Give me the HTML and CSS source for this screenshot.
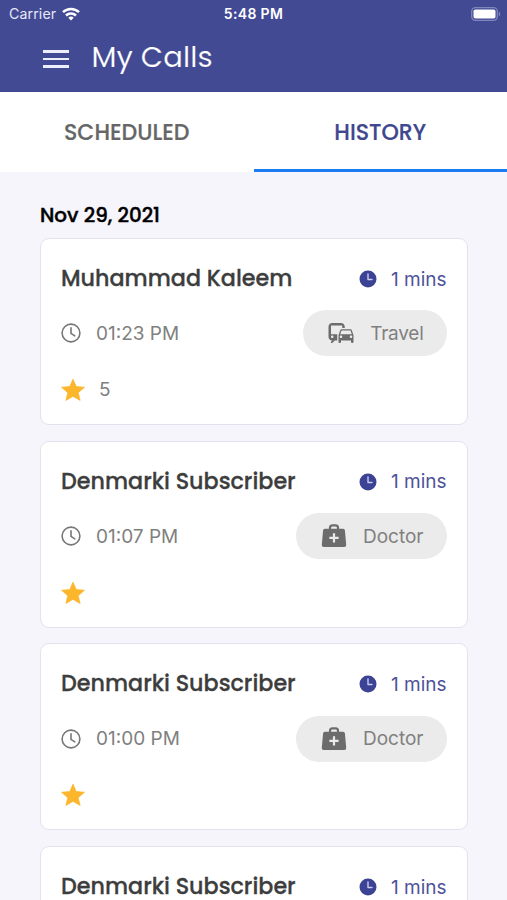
FILE: index.html
```html
<!DOCTYPE html>
<html lang="en">
<head>
<meta charset="utf-8">
<title>My Calls</title>
<link rel="stylesheet" href="styles.css">
</head>
<body>
<svg class="sprite" aria-hidden="true">
  <symbol id="clock" viewBox="0 0 20 20"><circle cx="10" cy="10" r="8.9" fill="none" stroke="currentColor" stroke-width="1.6"/><path d="M10 4.8v5.600l3.800 2.500" fill="none" stroke="currentColor" stroke-width="1.600" stroke-linecap="round" stroke-linejoin="round"/></symbol>
  <symbol id="clock-solid" viewBox="0 0 18 18"><circle cx="9" cy="9" r="8.500" fill="currentColor"/><path d="M9 4v5.500h4" fill="none" stroke="#c9cdf0" stroke-width="1.400" stroke-linecap="round" stroke-linejoin="round"/></symbol>
  <symbol id="star" viewBox="0 0 24 24"><path fill="#fbb62c" stroke="#fbb62c" stroke-width=".8" stroke-linejoin="round" d="M12 1.200 15.200 8.600 23.400 9.300 17.200 14.700 19.100 22.400 12 18.300 4.900 22.400 6.800 14.700 .6 9.300 8.800 8.600z"/></symbol>
  <symbol id="travel" viewBox="0 0 24 24"><path fill="currentColor" d="M12 4H5C3.34 4 2 5.34 2 7v8c0 1.66 1.34 3 3 3l-1 1v1h1l2-2.03L9 18v-5H4V5.98L13 6v2h2V7c0-1.66-1.34-3-3-3zM5 14c.55 0 1 .45 1 1s-.45 1-1 1-1-.45-1-1 .45-1 1-1zm15.57-4.34c-.14-.4-.52-.66-.97-.66h-7.19c-.46 0-.83.26-.98.66L10 13.77l.01 5.51c0 .38.31.72.69.72h.62c.38 0 .68-.38.68-.76V18h8v1.24c0 .38.31.76.69.76h.61c.38 0 .69-.34.69-.72l.01-1.37v-4.14l-1.43-4.11zm-8.16.34h7.19l1.03 3h-9.25l1.03-3zM12 16c-.55 0-1-.45-1-1s.45-1 1-1 1 .45 1 1-.45 1-1 1zm8 0c-.55 0-1-.45-1-1s.45-1 1-1 1 .45 1 1-.45 1-1 1z"/></symbol>
  <symbol id="doctor" viewBox="0 0 30 30"><path d="M11 8.500V6.800Q11 4.400 13.400 4.400h3.200Q19 4.400 19 6.800v1.700" fill="none" stroke="currentColor" stroke-width="2.200"/><path fill="currentColor" d="M5.800 7.700h18.400q1.500 0 1.700 1.500l1.300 14.600q.2 2.200-2 2.200H4.800q-2.200 0-2-2.200L4.100 9.200q.2-1.500 1.700-1.500z"/><path d="M15 12.200v9.200M10.400 16.800h9.200" stroke="#ebebeb" stroke-width="2.200"/></symbol>
</svg>

<header class="header">
  <div class="status">
    <div class="carrier"><span>Carrier</span>
      <svg class="wifi" viewBox="0 0 18 14"><g fill="none" stroke="#fff" stroke-width="2.500"><path d="M1 5.200a11.500 11.500 0 0 1 16 0"/><path d="M4 8.500a7.200 7.200 0 0 1 10 0"/></g><path fill="#fff" d="M6.300 10.700a4 4 0 0 1 5.400 0L9 13.600z"/></svg>
    </div>
    <div class="time">5:48 PM</div>
    <svg class="battery" viewBox="0 0 30 14"><rect x=".7" y=".7" width="25.600" height="12.600" rx="3.800" fill="none" stroke="#8086be" stroke-width="1.300"/><rect x="2.500" y="2.500" width="22" height="9" rx="1.800" fill="#fff"/><path d="M27.800 4.600q3 2.400 0 4.800z" fill="#8086be"/></svg>
  </div>
  <div class="titlebar">
    <div class="menu"><i></i><i></i><i></i></div>
    <h1>My Calls</h1>
  </div>
</header>

<nav class="tabs">
  <div class="tab"><span>SCHEDULED</span></div>
  <div class="tab active"><span>HISTORY</span></div>
</nav>

<main class="content">
  <h2>Nov 29, 2021</h2>
  <div class="list">
    <article class="card">
      <div class="row top"><h3>Muhammad Kaleem</h3><div class="duration"><svg><use href="#clock-solid"/></svg><span>1 mins</span></div></div>
      <div class="row middle"><div class="when"><svg><use href="#clock"/></svg><span>01:23 PM</span></div><div class="chip"><svg><use href="#travel"/></svg><span class="travel">Travel</span></div></div>
      <div class="row rating"><svg><use href="#star"/></svg><span>5</span></div>
    </article>
    <article class="card">
      <div class="row top"><h3>Denmarki Subscriber</h3><div class="duration"><svg><use href="#clock-solid"/></svg><span>1 mins</span></div></div>
      <div class="row middle"><div class="when"><svg><use href="#clock"/></svg><span>01:07 PM</span></div><div class="chip"><svg><use href="#doctor"/></svg><span>Doctor</span></div></div>
      <div class="row rating"><svg><use href="#star"/></svg></div>
    </article>
    <article class="card">
      <div class="row top"><h3>Denmarki Subscriber</h3><div class="duration"><svg><use href="#clock-solid"/></svg><span>1 mins</span></div></div>
      <div class="row middle"><div class="when"><svg><use href="#clock"/></svg><span>01:00 PM</span></div><div class="chip"><svg><use href="#doctor"/></svg><span>Doctor</span></div></div>
      <div class="row rating"><svg><use href="#star"/></svg></div>
    </article>
    <article class="card last">
      <div class="row top"><h3>Denmarki Subscriber</h3><div class="duration"><svg><use href="#clock-solid"/></svg><span>1 mins</span></div></div>
    </article>
  </div>
</main>
</body>
</html>
```

FILE: styles.css
```css
* { box-sizing: border-box; }
body { margin: 0; height: 900px; overflow: hidden; background: #f6f5fc; font-family: Inter, sans-serif; color: #808080; }
svg { display: block; flex: none; }
.sprite { display: none; }
h1, h2, h3 { margin: 0; font-family: Poppins, Inter, sans-serif; white-space: nowrap; }

.header { height: 92.300px; background: #434a94; color: #fff; }
.status { height: 27px; display: grid; grid-template-columns: 1fr auto 1fr; align-items: center; padding: 0 8px 0 9px; }
.carrier { display: flex; align-items: center; gap: 6px; font-size: 14.200px; letter-spacing: .1px; color: #e6e8f8; }
.wifi { width: 18px; height: 14px; }
.time { font-size: 14px; font-weight: 600; letter-spacing: .35px; margin-left: -1px; }
.battery { width: 30px; height: 14px; justify-self: end; margin-right: -2px; }
.titlebar { display: flex; align-items: center; height: 61px; padding-left: 43px; gap: 22.500px; }
.menu { width: 26px; display: grid; gap: 5px; padding-top: 3px; }
.menu i { height: 2.700px; background: #eceefa; }
h1 { font-size: 29px; font-weight: 400; line-height: 40px; padding-bottom: 2px; letter-spacing: .1px; -webkit-text-stroke: .2px #434a94; }

.tabs { height: 80px; display: grid; grid-template-columns: 1fr 1fr; background: #fff; }
.tab { display: flex; justify-content: center; align-items: center; font: 500 22.100px Poppins, Inter, sans-serif; color: #666; border-bottom: 3px solid transparent; padding-top: 4px; -webkit-text-stroke: .2px currentColor; }
.active { color: #41478f; border-color: #1c7bf0; }

.content { height: 727.700px; overflow: hidden; padding: 31px 39.500px 0 40px; }
h2 { font-size: 19.900px; font-weight: 500; line-height: 25px; color: #000; -webkit-text-stroke: .4px currentColor; }
.list { display: grid; gap: 15.600px; padding-top: 10px; }
.card { height: 187px; background: #fff; border: 1.500px solid #e3e2ee; border-radius: 9px; padding: 25px 20px 0; }
.last { height: 54px; border-bottom: 0; border-radius: 9px 9px 0 0; }
.row { display: flex; align-items: center; justify-content: space-between; }
.top { height: 30px; }
h3 { font-size: 22.250px; font-weight: 500; color: #3d3d3d; line-height: 30px; -webkit-text-stroke: .3px currentColor; }
.duration { display: flex; align-items: center; gap: 14px; color: #4e5299; font-size: 19px; white-space: nowrap; }
.duration svg { width: 18px; height: 18px; color: #3c4294; }
.middle { height: 46px; margin-top: 16.200px; }
.when { display: flex; align-items: center; gap: 15px; font-size: 19px; }
.when svg { width: 20px; height: 20px; color: #777; }
.chip { height: 46px; border-radius: 23px; background: #ebebeb; display: flex; align-items: center; gap: 14px; padding: 0 23px; font-size: 19px; }
.chip svg { width: 30px; height: 30px; color: #6c6c6c; }
.travel { letter-spacing: -.25px; }
.rating { justify-content: flex-start; gap: 14px; height: 24px; margin-top: 21.500px; font-size: 19px; }
.rating svg { width: 24px; height: 24px; }
```
